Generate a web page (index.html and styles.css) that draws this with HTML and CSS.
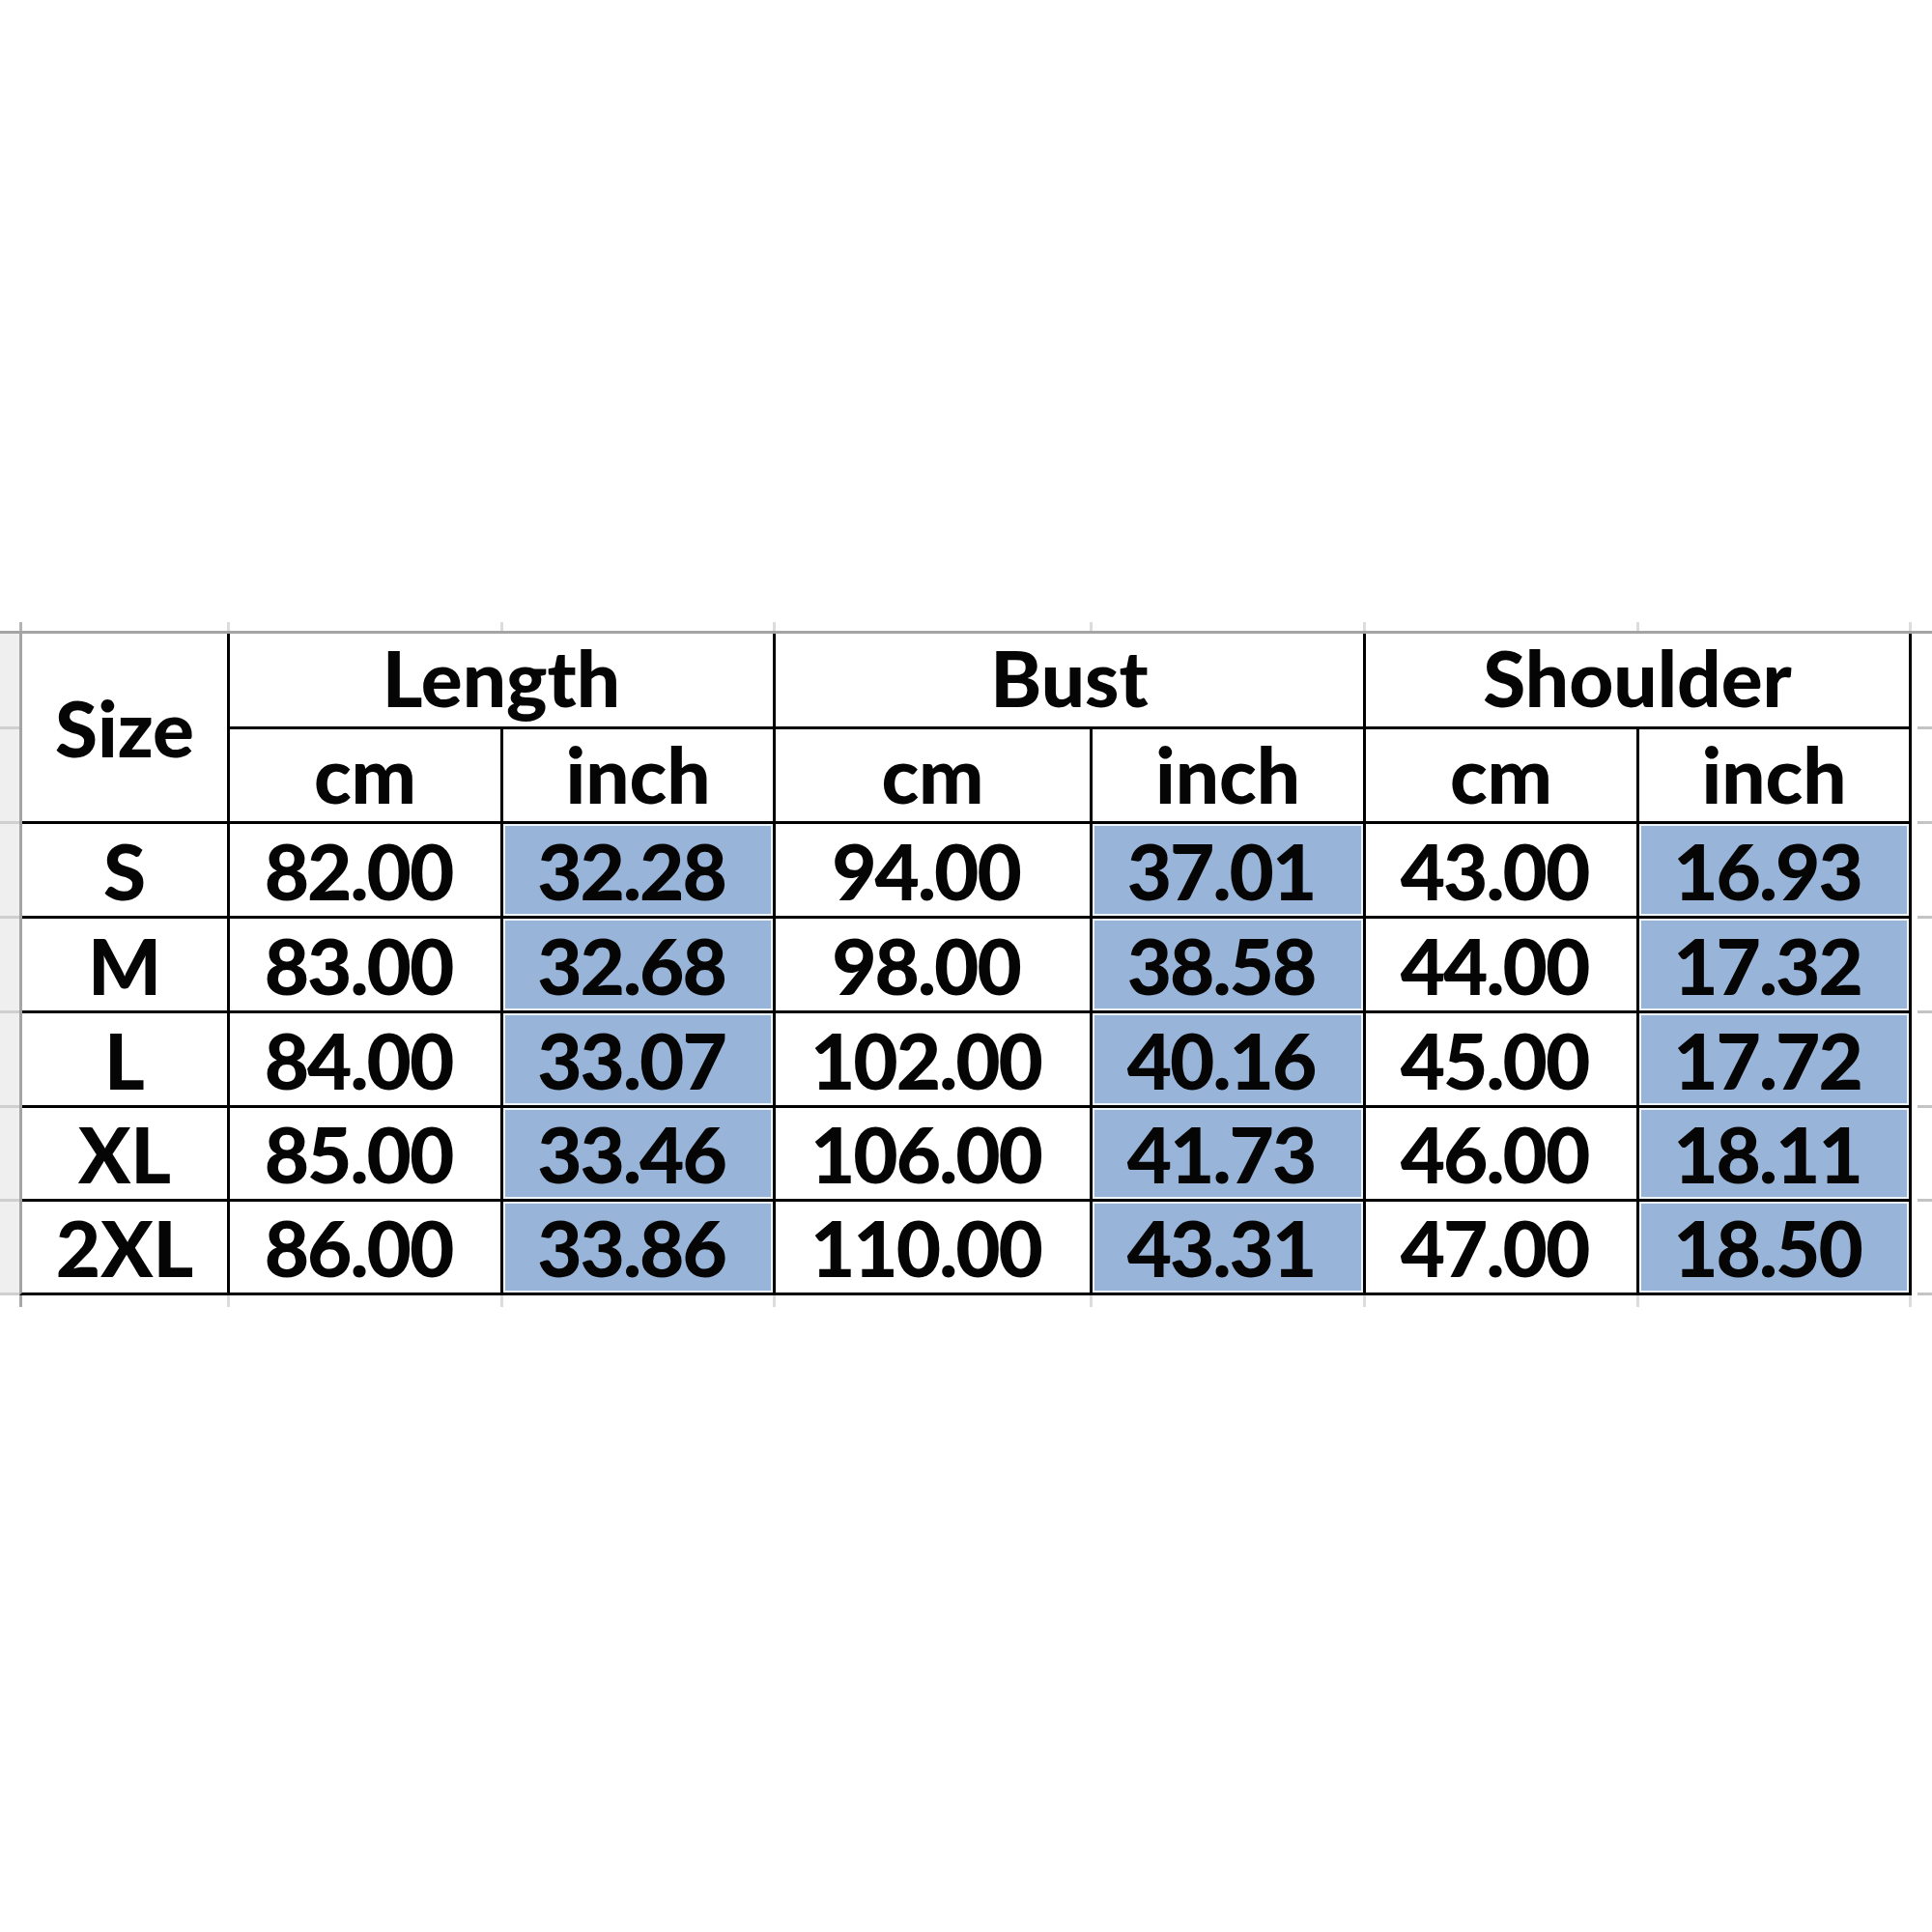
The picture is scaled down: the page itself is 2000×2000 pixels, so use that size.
FILE: index.html
```html
<!DOCTYPE html>
<html>
<head>
<meta charset="utf-8">
<title>Size chart</title>
<link rel="stylesheet" href="styles.css">
</head>
<body>
<div class="page">
  <div class="ticks ticks-top">
    <div></div><div></div><div></div><div></div><div></div><div></div><div></div>
  </div>
  <div class="sheet">
    <div class="strip strip-left">
      <div></div><div></div><div></div><div></div><div></div><div></div><div></div>
    </div>
    <div class="table">
      <div class="cell size-head">Size</div>
      <div class="cell group">Length</div>
      <div class="cell group group-wide">Bust</div>
      <div class="cell group">Shoulder</div>
      <div class="cell unit">cm</div>
      <div class="cell unit">inch</div>
      <div class="cell unit">cm</div>
      <div class="cell unit">inch</div>
      <div class="cell unit">cm</div>
      <div class="cell unit">inch</div>

      <div class="cell">S</div>
      <div class="cell num">82.00</div>
      <div class="cell num blue">32.28</div>
      <div class="cell num">94.00</div>
      <div class="cell num blue">37.01</div>
      <div class="cell num">43.00</div>
      <div class="cell num blue">16.93</div>

      <div class="cell">M</div>
      <div class="cell num">83.00</div>
      <div class="cell num blue">32.68</div>
      <div class="cell num">98.00</div>
      <div class="cell num blue">38.58</div>
      <div class="cell num">44.00</div>
      <div class="cell num blue">17.32</div>

      <div class="cell">L</div>
      <div class="cell num">84.00</div>
      <div class="cell num blue">33.07</div>
      <div class="cell num">102.00</div>
      <div class="cell num blue">40.16</div>
      <div class="cell num">45.00</div>
      <div class="cell num blue">17.72</div>

      <div class="cell">XL</div>
      <div class="cell num">85.00</div>
      <div class="cell num blue">33.46</div>
      <div class="cell num">106.00</div>
      <div class="cell num blue">41.73</div>
      <div class="cell num">46.00</div>
      <div class="cell num blue">18.11</div>

      <div class="cell">2XL</div>
      <div class="cell num">86.00</div>
      <div class="cell num blue">33.86</div>
      <div class="cell num">110.00</div>
      <div class="cell num blue">43.31</div>
      <div class="cell num">47.00</div>
      <div class="cell num blue">18.50</div>
    </div>
    <div class="strip strip-right">
      <div></div><div></div><div></div><div></div><div></div><div></div><div></div>
    </div>
  </div>
  <div class="ticks ticks-bottom">
    <div></div><div></div><div></div><div></div><div></div><div></div><div></div>
  </div>
</div>
</body>
</html>
```

FILE: styles.css
```css
html, body {
  margin: 0;
  padding: 0;
  background: #ffffff;
}

.page {
  width: 2000px;
  height: 2000px;
  padding-top: 644px;
  box-sizing: border-box;
  font-family: "Lato", "Open Sans", sans-serif;
  font-weight: 900;
  color: #050505;
}

.ticks {
  margin-left: 20px;
  width: 1959px;
  display: grid;
  grid-template-columns: 212px 280px 279px 325px 280px 280px 279px;
  column-gap: 3px;
  box-sizing: border-box;
  border-left: 3px solid #b4b4b4;
  border-right: 3px solid #dcdcdc;
  background: #dcdcdc;
}

.ticks div {
  background: #ffffff;
}

.ticks-top {
  height: 9px;
}

.ticks-bottom {
  height: 12px;
  border-left-color: #a8a8a8;
}

.sheet {
  display: flex;
  border-top: 3px solid #a4a4a4;
}

.strip {
  display: grid;
  grid-template-rows: 96px 95px 95px 95px 95px 94px 94px;
  row-gap: 3px;
  padding-bottom: 3px;
}

.strip-left {
  width: 20px;
  background: #cfcfcf;
}

.strip-left div {
  background: #efefef;
}

.strip-right {
  width: 15px;
  margin-left: 6px;
  background: #c4c4c4;
}

.strip-right div {
  background: #ffffff;
}

.table {
  display: grid;
  grid-template-columns: 212px 280px 279px 325px 280px 280px 279px;
  grid-template-rows: 96px 95px 95px 95px 95px 94px 94px;
  gap: 3px;
  background: #000000;
  border-left: 3px solid #a4a4a4;
  border-right: 3px solid #000000;
  border-bottom: 3px solid #000000;
}

.cell {
  background: #ffffff;
  display: flex;
  align-items: center;
  justify-content: center;
  font-size: 80px;
  line-height: 1;
  letter-spacing: 0;
}

.size-head {
  grid-row: span 2;
}

.group {
  grid-column: span 2;
  padding-bottom: 6px;
}

.unit {
  padding-bottom: 4px;
}

.num {
  letter-spacing: -2px;
  padding-right: 14px;
}

.blue {
  background: #98b5d9;
  box-shadow: inset 0 0 0 2px #eef4fb;
}
```
